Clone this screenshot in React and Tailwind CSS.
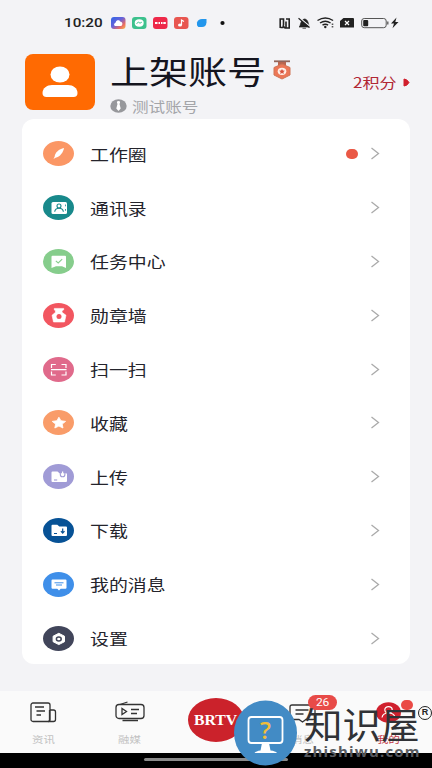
import React from 'react';
import clsx from 'clsx';

const Wide = ({ className, children }) => (
    <span className={clsx('inline-block origin-left scale-x-[1.22] whitespace-nowrap', className)}>{children}</span>
);

const menu = [
    {
        label: '工作圈',
        color: '#fb9765',
        dot: true,
        icon: <path d="M21 7c-5 1-9 4.500-9.300 8.500L10.500 18l2-1.300C17 16 20.500 11 21 7Z" fill="#fff" />,
    },
    {
        label: '通讯录',
        color: '#18898b',
        icon: (
            <>
                <rect x="8.500" y="7" width="15.500" height="12" rx="1.500" fill="#fff" />
                <circle cx="16" cy="11" r="2" fill="none" stroke="#18898b" strokeWidth="1.100" />
                <path d="M11.700 16.800c.6-4.800 8.100-4.800 8.700 0" fill="none" stroke="#18898b" strokeWidth="1.100" />
                <path d="M22.500 9.500v1.800M22.500 14v1.800" stroke="#18898b" strokeWidth=".8" />
            </>
        ),
    },
    {
        label: '任务中心',
        color: '#86cd8c',
        icon: (
            <>
                <path d="M9.500 6.800h12.500q1 0 1 1V19l-4-1.700h-6L8.500 19V7.800q0-1 1-1Z" fill="#fff" />
                <path d="m12.800 11.800 2.400 2.100 4-3.800" fill="none" stroke="#86cd8c" strokeWidth="1.100" />
            </>
        ),
    },
    {
        label: '勋章墙',
        color: '#f25660',
        icon: (
            <>
                <path d="M11.300 5.400h9.400v1.400l-1.700 1v1.500l4 3-1.500 6.700H10.500L9 12.300l3.500-3V7.800l-1.200-.9Z" fill="#fff" stroke="#fff" strokeLinejoin="round" strokeWidth=".6" />
                <circle cx="16" cy="13.600" r="2.500" fill="#f25660" />
            </>
        ),
    },
    {
        label: '扫一扫',
        color: '#e06a8b',
        icon: <path d="M8.500 11V7.500h4.300M18.500 7.500H23V11M8.500 14.500V18h4.300M18.500 18H23v-3.500M8 12.700h15.500" fill="none" stroke="#fff" strokeWidth="1.200" />,
    },
    {
        label: '收藏',
        color: '#f99c69',
        icon: <path d="m15.900 7.200 2 3.500 4.700.7-3.400 2.700.8 3.900-4.100-1.900-4.100 1.900.8-3.900-3.400-2.700 4.700-.7Z" fill="#fff" stroke="#fff" strokeLinejoin="round" strokeWidth=".8" />,
    },
    {
        label: '上传',
        color: '#a09bd6',
        icon: (
            <>
                <path d="M9.500 7.500h5l2 1.800H23q1 0 1 1v6.700q0 1-1 1H9.500q-1 0-1-1V8.500q0-1 1-1Z" fill="#fff" />
                <path d="M17.300 8v2.500q0 2.300 2.300 2.300t2.300-2.300V8" fill="none" stroke="#a09bd6" strokeWidth="1.100" />
                <path d="M19.600 11V7.500" stroke="#fff" strokeWidth="1.300" />
                <path d="M11 16h3.200" stroke="#a09bd6" strokeWidth="1.100" />
            </>
        ),
    },
    {
        label: '下载',
        color: '#075296',
        icon: (
            <>
                <path d="M9.500 6.800h4.800l2 1.700H23q1 0 1 1v7.500q0 1-1 1H9.500q-1 0-1-1V7.800q0-1 1-1Z" fill="#fff" />
                <path d="M19.700 10.500v4.500M17.900 13.200l1.800 2 1.800-2M11 15.500h3" fill="none" stroke="#075296" strokeWidth="1.200" />
            </>
        ),
    },
    {
        label: '我的消息',
        color: '#3f8fe9',
        icon: (
            <>
                <path d="M9.500 7.500h13q1 0 1 1v7.200q0 1-1 1h-4.800L16 18.500l-1.700-1.800H9.500q-1 0-1-1V8.500q0-1 1-1Z" fill="#fff" />
                <path d="M11.500 10.800h9M13 13h6" stroke="#3f8fe9" />
            </>
        ),
    },
    {
        label: '设置',
        color: '#41455a',
        icon: (
            <>
                <path d="m15.800 7.300 5.700 2.900v5.500l-5.700 2.900-5.700-2.900v-5.500Z" fill="#fff" stroke="#fff" strokeWidth="1" strokeLinejoin="round" />
                <ellipse cx="15.800" cy="13" rx="2.400" ry="2" fill="#fff" stroke="#41455a" strokeWidth="1.500" />
            </>
        ),
    },
];

const StatusBar = () => (
    <div className="flex h-[46px] items-center pl-[64px]">
        <Wide className="w-[47px] font-['Roboto',sans-serif] text-[12.500px] font-medium text-[#222]">10:20</Wide>
        <svg width="97" height="14" viewBox="0 0 97 14">
            <defs>
                <linearGradient id="photo" x1="0" y1="0" x2="1" y2="1">
                    <stop offset="0" stopColor="#2e65e8" />
                    <stop offset=".45" stopColor="#6862d8" />
                    <stop offset=".75" stopColor="#ec6b63" />
                    <stop offset="1" stopColor="#f4bd4d" />
                </linearGradient>
            </defs>
            <rect y="1" width="14.500" height="12" rx="3" fill="url(#photo)" />
            <path d="M3 9c0-2 2-2 2-3.500C6 3.500 9 4 9 5.500c3 0 3 4 1 4.500H4Z" fill="#fff" />
            <rect x="21" y="1" width="14.500" height="12" rx="3" fill="#3cc18d" />
            <ellipse cx="28.200" cy="7" rx="4.500" ry="3.700" fill="#fff" />
            <path d="m25.500 7.500 2-1.300 1.500 1 1.800-1" fill="none" stroke="#3cc18d" />
            <rect x="42" y="1" width="14.500" height="12" rx="3" fill="#ee2849" />
            <path d="M44 7h2.500M47.500 7h1.500M50 7h1.500M52.300 7h2.500" stroke="#fff" strokeWidth="2" />
            <rect x="63" y="1" width="14.500" height="12" rx="3" fill="#e85650" />
            <ellipse cx="69" cy="9" rx="2" ry="1.600" fill="#fff" />
            <path d="M70.500 9V4l2.500 1.500" fill="none" stroke="#fff" strokeWidth="1.200" />
            <path d="M86 6.500Q87 3 91 3h4.500v3.500Q95 11 91 11h-3.500Q85.500 10 86 6.500Z" fill="#2296ec" />
        </svg>
        <svg width="200" height="16" viewBox="208 15 200 16" fill="none">
            <circle cx="222.500" cy="23" r="2.100" fill="#111" />
            <path d="M280.200 28v-9h3.300v6.500M283.500 27.500h-3M286 28v-6.500M286 19h3.200v9H285l-2.300-2.500" stroke="#222" strokeWidth="1.600" />
            <path d="M299 27c2-1 1-7 5.500-8 4 .5 3.500 5 5 8ZM302.500 28.300h3.500" fill="#222" stroke="#222" strokeWidth=".7" />
            <path d="m298.500 17 12 10" stroke="#f4f4f6" strokeWidth="1.500" />
            <path d="m298.500 18.200 11 9.300" stroke="#222" strokeWidth="1.200" />
            <path d="M317.500 20.500q7.800-5 15.600 0M320 23q5.300-3.500 10.600 0M322.500 25.200q2.800-1.800 5.600 0" stroke="#222" strokeWidth="1.400" />
            <circle cx="325.300" cy="27" r="1.200" fill="#222" />
            <path d="M332.500 23.500v1.500M332.500 26v1.500" stroke="#555" strokeWidth="1.600" />
            <path d="M343.500 18h9.500q1 0 1 1v8.500h-14V21Z" fill="#222" />
            <path d="m345 21 4 4m0-4-4 4" stroke="#fff" strokeWidth="1.200" />
            <rect x="361.700" y="18.500" width="24.500" height="9.200" rx="2.500" stroke="#555" />
            <rect x="363.200" y="20" width="5" height="6.200" rx="1" fill="#222" />
            <path d="M387.800 21.500v3" stroke="#555" strokeWidth="1.300" />
            <path d="m396.500 17.500-5.500 6h3l-1.500 4.700 6-6.200h-3.200Z" fill="#222" />
        </svg>
    </div>
);

const Header = () => (
    <div className="flex h-[73px] pl-[25px]">
        <div className="mt-2 flex h-[56px] w-[70px] items-center justify-center rounded-[8px] bg-[#ff6a02]">
            <svg width="36" height="32" viewBox="0 0 36 32" fill="#fff">
                <ellipse cx="18" cy="8.500" rx="9.500" ry="8" />
                <path d="M.5 27C.5 22 5 19 10 19h16c5 0 9.500 3 9.500 8q0 4-4 4h-27q-4 0-4-4Z" />
            </svg>
        </div>
        <div className="ml-[15px] w-[243px]">
            <div className="flex h-[50px] items-center">
                <Wide className="-mt-[3px] w-[163px] text-[32px] leading-[50px] text-[#15151f]">上架账号</Wide>
                <svg className="-mt-[2px]" width="18" height="20" viewBox="0 0 18 20">
                    <path d="M1 1.300h16" stroke="#93655a" strokeWidth="1.800" />
                    <path d="M5 2h8v4H5Z" fill="#b8654f" />
                    <path d="m9 4 8 3.500v7.500l-8 4-8-4V7.500Z" fill="#ec7757" stroke="#d07555" />
                    <ellipse cx="9" cy="11.300" rx="4.300" ry="3.600" fill="#fff0e8" />
                    <path d="m9 8.900.9 1.600 2 .3-1.500 1.300.4 1.800L9 13l-1.800.9.4-1.800-1.500-1.300 2-.3Z" fill="#d6513d" />
                </svg>
            </div>
            <div className="flex h-5 items-center">
                <svg width="17" height="14" viewBox="0 0 17 14">
                    <ellipse cx="8.500" cy="7" rx="8.200" ry="6.700" fill="#97989c" />
                    <path d="M8.500 2c1.800 0 2 1.200 1 3l1.200 4.500-2.200 2.500-2.200-2.500L7.500 5c-1-1.800-.8-3 1-3Z" fill="#fff" />
                </svg>
                <Wide className="ml-[5px] text-[13.600px] leading-5 text-[#a4a5a9]">测试账号</Wide>
            </div>
        </div>
        <div className="mt-[26px] flex h-5 items-center text-[#b12734]">
            <Wide className="w-[50px] text-[14px] leading-5">2积分</Wide>
            <svg width="7" height="9" viewBox="0 0 7 9"><path d="M1 1q3 0 5 3.500Q4 8 1 8Z" fill="#d11f2d" stroke="#d11f2d" strokeLinejoin="round" /></svg>
        </div>
    </div>
);

const MenuRow = ({ item }) => (
    <div className="flex h-[53.800px] items-center pl-[21px] pr-[30px]">
        <svg width="31" height="25" viewBox="0 0 31 25">
            <ellipse cx="15.500" cy="12.500" rx="15.500" ry="12.500" fill={item.color} />
            {item.icon}
        </svg>
        <Wide className="ml-[16px] text-[15.500px] leading-6 text-[#24242c]">{item.label}</Wide>
        <div className="ml-auto flex items-center gap-3">
            {item.dot && <span className="h-[10px] w-[12px] rounded-full bg-[#ea5845]" />}
            <svg width="10" height="13" viewBox="0 0 10 13" fill="none" stroke="#aaa" strokeWidth="1.300">
                <path d="m1.500 1 7 5.500-7 5.500" />
            </svg>
        </div>
    </div>
);

const TabLabel = ({ children, className }) => (
    <span className={clsx('inline-block scale-x-[1.2] whitespace-nowrap text-[9.500px] leading-4', className)}>{children}</span>
);

const TabBar = () => (
    <div className="grid h-[62px] grid-cols-5 bg-[#fafafa]">
        <div className="flex flex-col items-center pt-[10px]">
            <svg width="27" height="22" viewBox="0 0 27 22" fill="none" stroke="#333" strokeWidth="1.300">
                <rect x="1" y="2" width="19" height="18.500" rx="2" />
                <path d="M20 9h3.500q2 0 2 2v7.500q0 2-2 2H18M19.500 20V9M5 6h9M6.500 10H15M6.500 14H11" />
            </svg>
            <TabLabel className="mt-[8px] text-[#c2c2c2]">资讯</TabLabel>
        </div>
        <div className="flex flex-col items-center pt-[10px]">
            <svg width="30" height="22" viewBox="0 0 30 22" fill="none" stroke="#333" strokeWidth="1.300">
                <rect x="1" y="3.500" width="28" height="14" rx="3" />
                <path d="M5 3.500 12.500 1M7.500 19.500H23M7 7.500v6l4.500-3ZM16 8.500h8M16 12.500h6" />
            </svg>
            <TabLabel className="mt-[8px] text-[#c2c2c2]">融媒</TabLabel>
        </div>
        <div className="flex justify-center pt-[7px]">
            <div className="flex h-[44px] w-[56px] shrink-0 items-center justify-center rounded-[50%] bg-[#cb222b] font-['Liberation_Serif',serif] text-[15px] font-bold text-white">
                <span className="inline-block scale-x-[1.050]">BRTV</span>
            </div>
        </div>
        <div className="relative flex flex-col items-center pt-[13px]">
            <svg width="27" height="19" viewBox="0 0 27 19" fill="none" stroke="#333" strokeWidth="1.300">
                <path d="M3 1h21q2 0 2 2v11q0 1.500-2 1.500h-7L13.500 18 10 15.500H3q-2 0-2-1.500V3q0-2 2-2ZM6.500 6h13M6.500 10h8" />
            </svg>
            <TabLabel className="mt-[8px] text-[#c2c2c2]">消息</TabLabel>
            <span className="absolute left-[49px] top-[4px] flex h-[15px] w-[29px] items-center justify-center rounded-full bg-[#e84b48] font-['Roboto',sans-serif] text-[10px] text-white">
                <span className="inline-block scale-x-[1.200]">26</span>
            </span>
        </div>
        <div className="relative flex flex-col items-center pt-[11px]">
            <svg width="25" height="21" viewBox="0 0 25 21">
                <ellipse cx="12.500" cy="10.500" rx="12.500" ry="10.300" fill="#d0202d" />
                <ellipse cx="12.500" cy="7.700" rx="3.700" ry="3.100" fill="none" stroke="#fff" strokeWidth="1.200" />
                <path d="M6 15.500c1-6 12-6 13 0" fill="none" stroke="#fff" strokeWidth="1.200" />
            </svg>
            <TabLabel className="mt-[8px] text-[#c33a47]">我的</TabLabel>
            <span className="absolute left-[55px] top-[9px] h-[10px] w-[12px] rounded-full bg-[#ea4a45]" />
        </div>
    </div>
);

const Watermark = () => (
    <div className="absolute bottom-[1px] left-[234px] flex h-[67px] w-[198px]">
        <svg className="shrink-0" width="63" height="67" viewBox="0 0 63 67">
            <ellipse cx="31.500" cy="33" rx="31.500" ry="32.500" fill="#428bc5" />
            <rect x="14.500" y="17" width="34" height="26" rx="3" fill="none" stroke="#fff" strokeWidth="1.800" />
            <path d="M28 43h7l1.500 7.500q5 .5 6.500 2.500H20.500q1.500-2 6-2.500Z" fill="#fff" />
            <text x="31.500" y="38.500" textAnchor="middle" fontFamily="Open Sans, sans-serif" fontSize="24" fontWeight="600" fill="#f1bd3b">?</text>
        </svg>
        <div className="ml-[7px] flex flex-col">
            <span className="inline-block h-[42px] origin-left scale-x-[1.070] whitespace-nowrap text-[36px] leading-[46px] text-[#303236]">知识屋</span>
            <span className="inline-block h-[18px] whitespace-nowrap font-['Open_Sans',sans-serif] text-[15px] font-bold leading-[18px] tracking-[1.200px] text-[#585a5f]">zhishiwu.com</span>
        </div>
        <span className="absolute left-[184px] top-[6px] flex h-[14px] w-[14px] items-center justify-center rounded-full border-[1.500px] border-[#222] font-['Liberation_Sans',sans-serif] text-[9px] font-bold text-[#222]">R</span>
    </div>
);

const App = () => {
    return (
        <div className="relative flex h-[768px] w-[432px] flex-col overflow-hidden bg-[#f3f3f6] font-['Noto_Sans_CJK_SC',sans-serif]">
            <StatusBar />
            <Header />
            <div className="mx-[22px] h-[545px] w-[388px] rounded-[12px] bg-white pt-[8px]">
                {menu.map((item) => (
                    <MenuRow key={item.label} item={item} />
                ))}
            </div>
            <div className="mt-auto">
                <TabBar />
                <div className="flex h-[15px] justify-center bg-black pt-[5px]">
                    <span className="h-[3px] w-[144px] rounded-full bg-[#8b8b8b]" />
                </div>
            </div>
            <Watermark />
        </div>
    );
};

export default App;
